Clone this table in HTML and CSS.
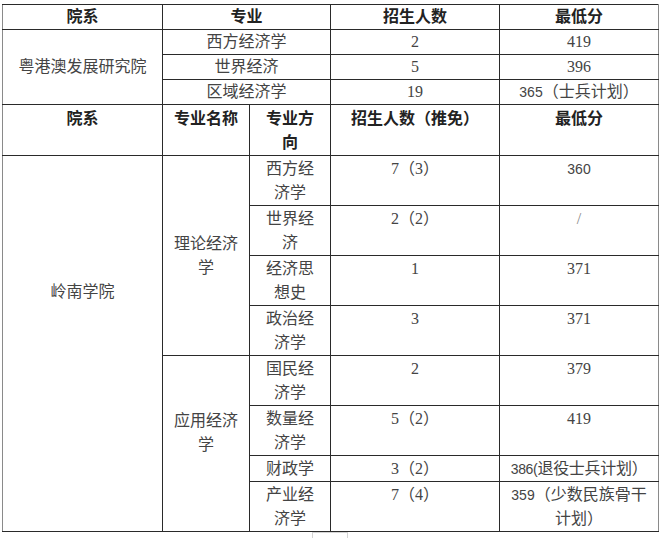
FILE: index.html
```html
<!DOCTYPE html>
<html lang="zh-CN">
<head>
<meta charset="utf-8">
<title>招生录取分数</title>
<link rel="stylesheet" href="styles.css">
</head>
<body>
<table class="grid">
  <colgroup>
    <col class="c1"><col class="c2"><col class="c3"><col class="c4"><col class="c5">
  </colgroup>
  <tr class="r26 mid">
    <th>院系</th><th colspan="2">专业</th><th>招生人数</th><th>最低分</th>
  </tr>
  <tr class="r25 mid">
    <td rowspan="3">粤港澳发展研究院</td><td colspan="2">西方经济学</td><td>2</td><td>419</td>
  </tr>
  <tr class="r25 mid">
    <td colspan="2">世界经济</td><td>5</td><td>396</td>
  </tr>
  <tr class="r25 mid">
    <td colspan="2">区域经济学</td><td>19</td><td><span class="sans">365</span>（士兵计划）</td>
  </tr>
  <tr class="r52 top">
    <th>院系</th><th>专业名称</th><th>专业方向</th><th>招生人数（推免）</th><th>最低分</th>
  </tr>
  <tr class="r50 top">
    <td rowspan="8" class="school">岭南学院</td>
    <td rowspan="4" class="major-a">理论经济学</td>
    <td>西方经济学</td><td>7（3）</td><td><span class="sans">360</span></td>
  </tr>
  <tr class="r50 top">
    <td>世界经济</td><td>2（2）</td><td class="slash">/</td>
  </tr>
  <tr class="r50 top">
    <td>经济思想史</td><td>1</td><td>371</td>
  </tr>
  <tr class="r50 top">
    <td>政治经济学</td><td>3</td><td>371</td>
  </tr>
  <tr class="r50 top">
    <td rowspan="4" class="major-b">应用经济学</td>
    <td>国民经济学</td><td>2</td><td>379</td>
  </tr>
  <tr class="r50 top">
    <td>数量经济学</td><td>5（2）</td><td>419</td>
  </tr>
  <tr class="r25 top">
    <td>财政学</td><td>3（2）</td><td class="nowrap"><span class="sans">386(</span>退役士兵计划）</td>
  </tr>
  <tr class="r50 top">
    <td>产业经济学</td><td>7（4）</td><td><span class="sans">359</span>（少数民族骨干计划）</td>
  </tr>
</table>
<div class="stub"></div>
</body>
</html>
```

FILE: styles.css
```css
html, body {
  margin: 0;
  padding: 0;
  background: #ffffff;
}

body {
  padding: 4px 0 0 2px;
  font-family: "Liberation Serif", "Noto Sans CJK SC", serif;
  font-size: 16px;
  color: #444444;
}

.grid {
  border-collapse: collapse;
  table-layout: fixed;
  width: 656px;
}

.c1 { width: 160px; }
.c2 { width: 87px; }
.c3 { width: 81px; }
.c4 { width: 169px; }
.c5 { width: 159px; }

.grid th,
.grid td {
  border: 1px solid #2a2a2a;
  padding: 0 9px;
  text-align: center;
  line-height: 24px;
  font-weight: 400;
}

.grid th {
  font-weight: 700;
  color: #222;
}

.grid tr > :first-child {
  border-left-color: #8a8a8a;
}

.grid tr > :last-child {
  border-right-color: #8a8a8a;
}

.r25 { height: 24px; }
.r26 { height: 25px; }
.r50 { height: 49px; }
.r52 { height: 51px; }

.mid > th,
.mid > td {
  vertical-align: middle;
}

.top > th,
.top > td {
  vertical-align: top;
  padding-top: 1px;
}

.top > th {
  padding-top: 2px;
}

.grid td.school {
  padding-top: 124px;
}

.grid td.major-a {
  padding-top: 76px;
}

.grid td.major-b {
  padding-top: 53px;
}

.sans {
  font-family: "Liberation Sans", "Noto Sans CJK SC", sans-serif;
  font-size: 14px;
}

.slash {
  color: #888;
}

.nowrap {
  white-space: nowrap;
  letter-spacing: -0.3px;
}

.stub {
  margin-left: 310px;
  width: 34px;
  height: 6px;
  border: 1px solid #d4d4d4;
  border-bottom: none;
}
```
